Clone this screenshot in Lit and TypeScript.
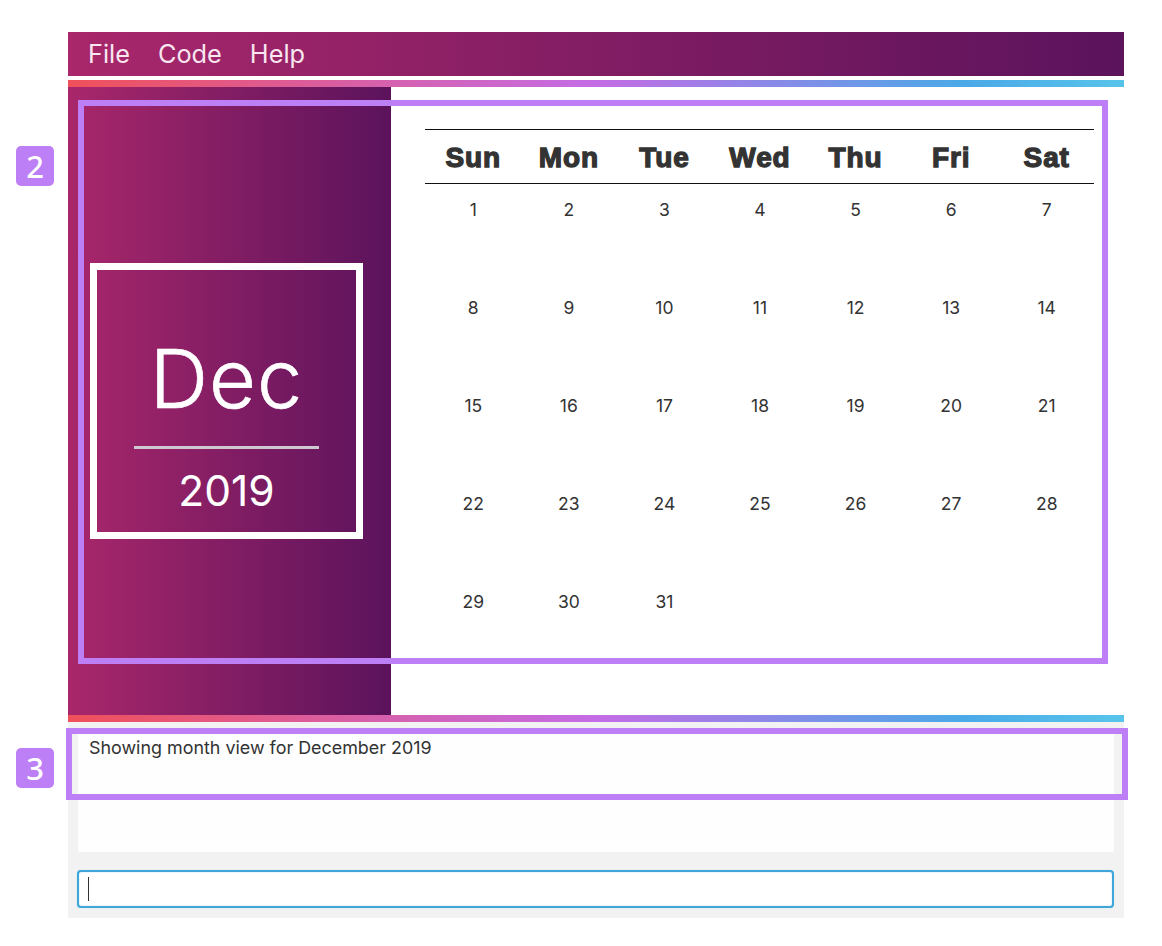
import { LitElement, html, css } from "lit";
import { customElement } from "lit/decorators.js";

const DAYS = ["Sun", "Mon", "Tue", "Wed", "Thu", "Fri", "Sat"];
const DATES = Array.from({ length: 31 }, (_, i) => i + 1);

@customElement("app-root")
export class AppRoot extends LitElement {
  static styles = css`
    :host {
      display: block;
      position: relative;
      width: 1162px;
      height: 946px;
      background: #fff;
      font-family: Inter, "Liberation Sans", sans-serif;
      overflow: hidden;
    }
    .app {
      position: absolute;
      left: 68px;
      top: 32px;
      width: 1056px;
      height: 886px;
      display: flex;
      flex-direction: column;
    }
    .menu {
      height: 44px;
      flex: none;
      box-sizing: border-box;
      display: flex;
      align-items: center;
      gap: 28px;
      padding: 0 0 2px 20px;
      background: linear-gradient(90deg, #a9276b, #5b135c);
      color: #f8e6f0;
      font-size: 25.3px;
      margin-bottom: 4px;
    }
    .rainbow {
      height: 7px;
      flex: none;
      background: linear-gradient(90deg, #f0505a 0%, #c46ce6 50%, #4aaae8 85%, #58c4ea 100%);
    }
    .main {
      flex: none;
      height: 628px;
      display: flex;
    }
    .side {
      width: 323px;
      flex: none;
      background: linear-gradient(90deg, #a9276b, #5b135c);
      display: flex;
      padding: 176px 0 0 22px;
      box-sizing: border-box;
    }
    .frame {
      width: 273px;
      height: 276px;
      box-sizing: border-box;
      border: 7px solid #fff;
      display: flex;
      flex-direction: column;
      align-items: center;
      color: #fff;
    }
    .month {
      flex: none;
      font-size: 81px;
      line-height: 94px;
      margin-top: 62px;
      font-weight: 300;
      letter-spacing: 1px;
      -webkit-text-stroke: 0.7px #fff;
    }
    .rule {
      flex: none;
      width: 185px;
      height: 3px;
      background: #cfc8d0;
      margin-top: 20px;
    }
    .year {
      flex: none;
      font-size: 42.5px;
      line-height: 50px;
      margin-top: 17px;
      font-weight: 400;
    }
    .cal {
      flex: 1;
      padding: 42px 30px 0 34px;
      color: #333;
    }
    .grid {
      display: grid;
      grid-template-columns: repeat(7, 1fr);
    }
    .head {
      border-top: 1.5px solid #111;
      border-bottom: 1.5px solid #111;
      height: 55px;
      box-sizing: border-box;
      align-items: center;
    }
    .head span {
      text-align: center;
      font-family: "Liberation Sans", Arial, sans-serif;
      font-weight: 700;
      font-size: 28px;
      -webkit-text-stroke: 1.3px #333;
      color: #333;
      letter-spacing: 0.9px;
      padding: 2px 0 0 1px;
    }
    .dates {
      grid-auto-rows: 98px;
    }
    .dates span {
      text-align: center;
      font-size: 17.5px;
      line-height: 20px;
      padding-top: 16px;
      padding-left: 1px;
    }
    .bottom {
      flex: 1;
      background: #f2f2f2;
      padding: 10px 10px 10px 9px;
      display: flex;
      flex-direction: column;
    }
    .result {
      height: 120px;
      flex: none;
      background: #fefefe;
      border-radius: 2px;
      margin: 0 0 0 1px;
      padding: 5px 11px;
      box-sizing: border-box;
      color: #333;
      font-size: 17.9px;
      line-height: 21px;
    }
    .input {
      margin-top: 18px;
      height: 38px;
      flex: none;
      box-sizing: border-box;
      background: #fff;
      border: 2px solid #3fa7d8;
      border-radius: 4px;
      box-shadow: inset 0 0 2px #bfe4f4, 0 0 1px #9fd4ec;
      padding: 5px 0 5px 9px;
      display: flex;
    }
    .caret {
      width: 1px;
      background: #333;
    }
    .note {
      position: absolute;
      box-sizing: border-box;
      border: 6px solid #bd7ff5;
      pointer-events: none;
    }
    .n2 {
      left: 78px;
      top: 100px;
      width: 1030px;
      height: 564px;
    }
    .n3 {
      left: 66px;
      top: 728px;
      width: 1062px;
      height: 72px;
    }
    .badge {
      position: absolute;
      left: 16px;
      width: 38px;
      height: 40px;
      border-radius: 5px;
      background: #bd7ff5;
      color: #fff;
      font-family: "Noto Sans", sans-serif;
      font-weight: 500;
      font-size: 31px;
      line-height: 40px;
      text-align: center;
    }
    .b2 { top: 146px; }
    .b3 { top: 748px; }
  `;

  render() {
    return html`
      <div class="app">
        <div class="menu"><span>File</span><span>Code</span><span>Help</span></div>
        <div class="rainbow"></div>
        <div class="main">
          <div class="side">
            <div class="frame">
              <div class="month">Dec</div>
              <div class="rule"></div>
              <div class="year">2019</div>
            </div>
          </div>
          <div class="cal">
            <div class="grid head">${DAYS.map((d) => html`<span>${d}</span>`)}</div>
            <div class="grid dates">${DATES.map((d) => html`<span>${d}</span>`)}</div>
          </div>
        </div>
        <div class="rainbow"></div>
        <div class="bottom">
          <div class="result">Showing month view for December 2019</div>
          <div class="input"><div class="caret"></div></div>
        </div>
      </div>
      <div class="note n2"></div>
      <div class="note n3"></div>
      <div class="badge b2">2</div>
      <div class="badge b3">3</div>
    `;
  }
}
